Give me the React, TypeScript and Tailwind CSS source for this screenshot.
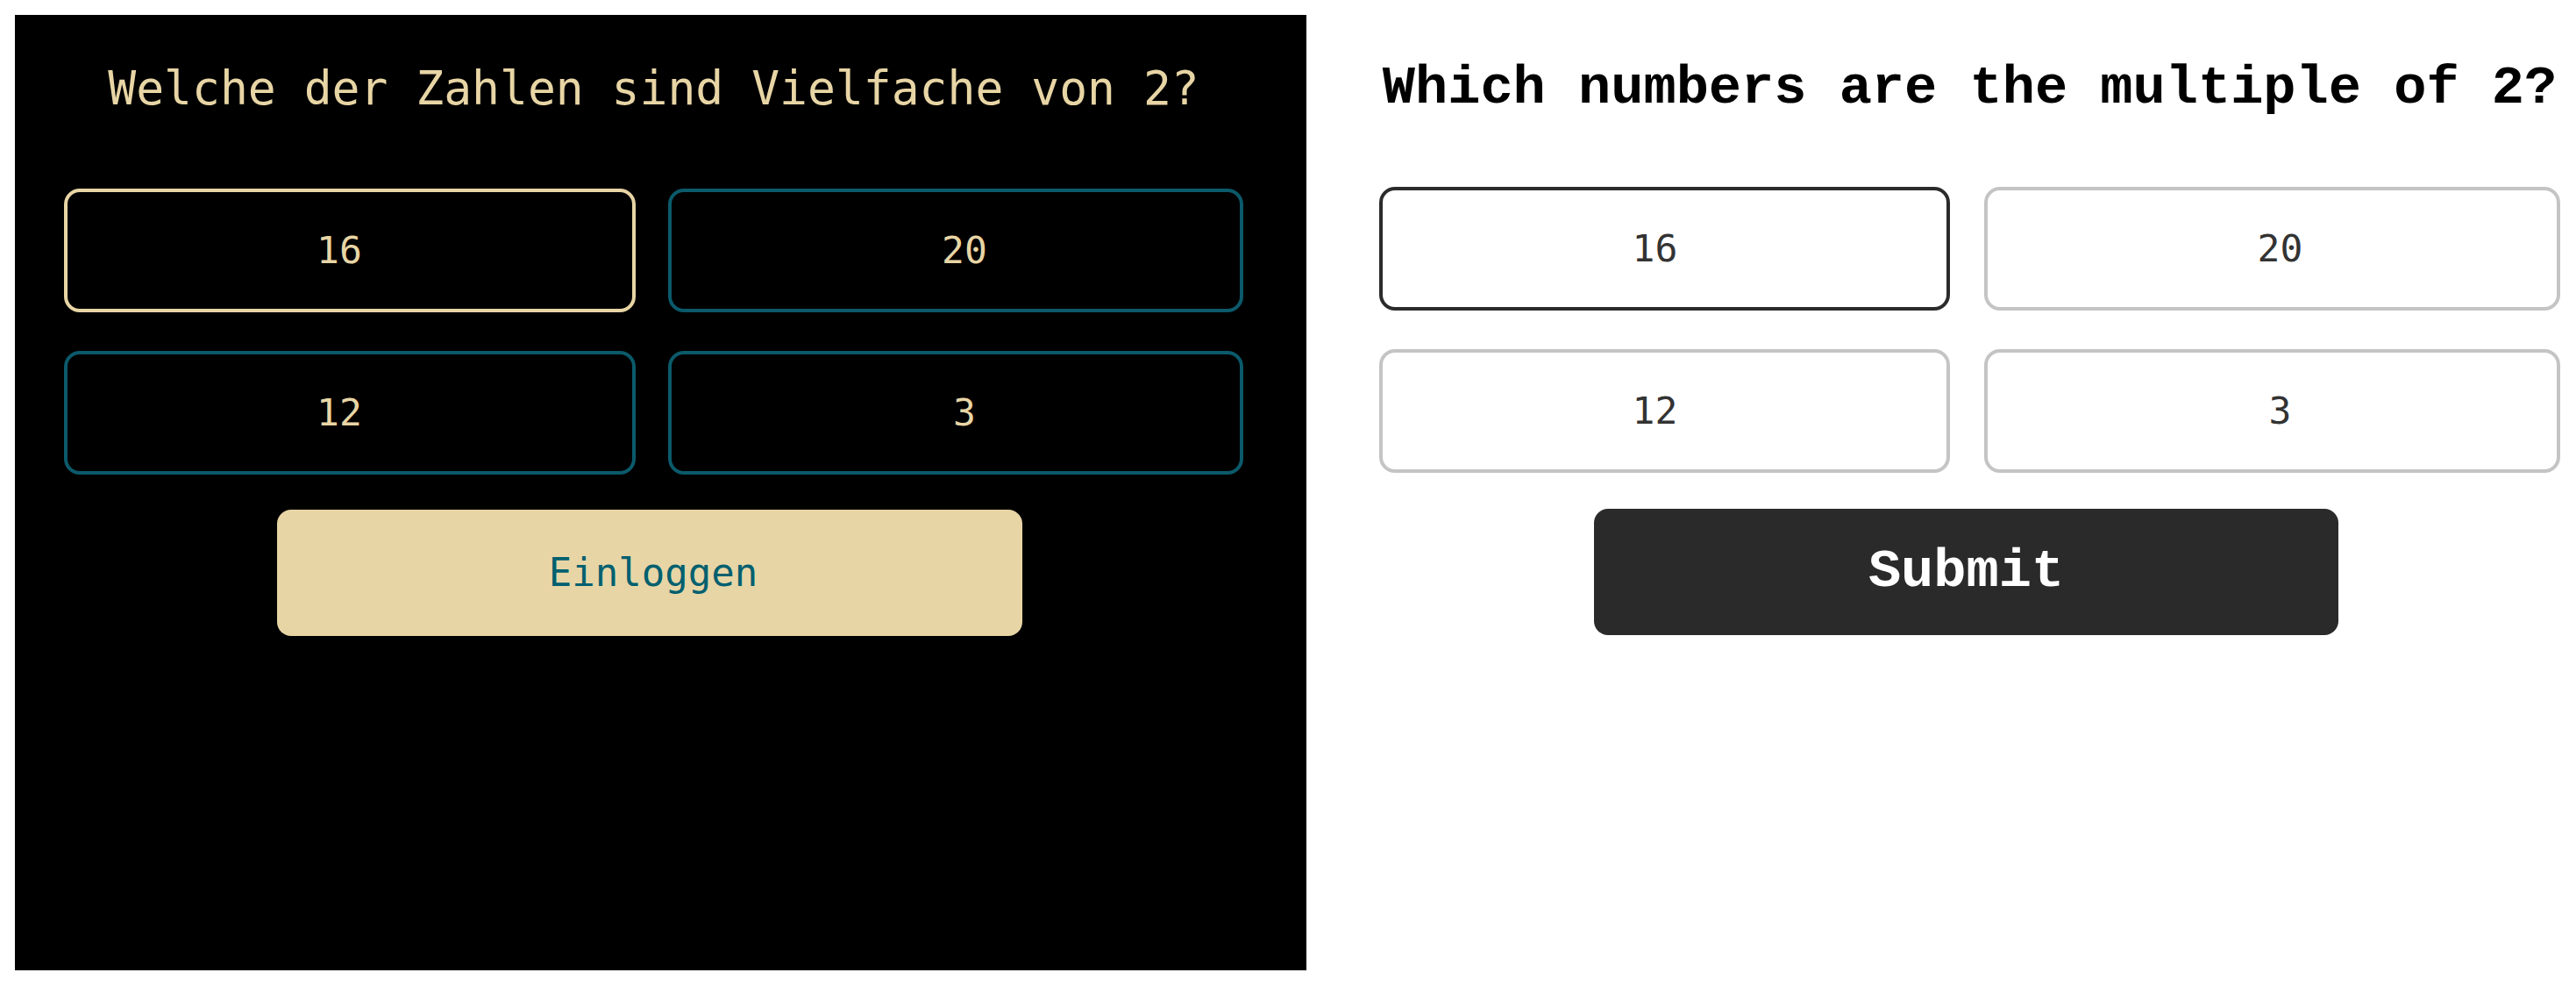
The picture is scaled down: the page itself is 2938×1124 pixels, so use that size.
import React from "react";

const options = [
  { label: "16", selected: true, col: 0 },
  { label: "20", selected: false, col: 1 },
  { label: "12", selected: false, col: 0 },
  { label: "3", selected: false, col: 1 },
];

export default function App() {
  return (
    <div className="flex w-[2938px] h-[1124px] bg-white overflow-hidden">
      {/* Left: dark theme */}
      <div className="ml-[17px] mt-[17px] w-[1473px] h-[1090px] shrink-0 bg-black border-b border-[#dcdcdc] flex flex-col pl-[56px] pr-[72px] font-['DejaVu_Sans_Mono',monospace]">
        <h1 className="mt-[52px] text-center text-[53px] leading-[64px] text-[#e8d5a5] whitespace-nowrap">
          Welche der Zahlen sind Vielfache von 2?
        </h1>
        <div className="mt-[82px] grid grid-cols-[652px_656px] gap-x-[37px] gap-y-[44px]">
          {options.map((o) => (
            <button
              key={o.label}
              className={`h-[141px] rounded-[18px] border-4 bg-black text-[43px] leading-none text-[#e8d5a5] flex items-center justify-center ${
                o.selected ? "border-[#e8d5a5]" : "border-[#0b5a6b]"
              } ${o.col === 0 ? "pr-[24px]" : "pl-[20px]"}`}
            >
              {o.label}
            </button>
          ))}
        </div>
        <button className="mt-[40px] ml-[243px] self-start w-[850px] h-[144px] rounded-[16px] bg-[#e8d5a5] text-[#00606f] text-[44px] leading-none flex items-center justify-center pl-[8px]">
          Einloggen
        </button>
      </div>

      {/* Right: light theme */}
      <div className="ml-[83px] w-[1347px] shrink-0 flex flex-col">
        <h1 className="mt-[65px] text-center text-[62px] leading-[72px] font-bold text-black whitespace-nowrap font-['Liberation_Mono',monospace]">
          Which numbers are the multiple of 2?
        </h1>
        <div className="mt-[76px] grid grid-cols-[651px_657px] gap-x-[39px] gap-y-[44px] font-['DejaVu_Sans_Mono',monospace]">
          {options.map((o) => (
            <button
              key={o.label}
              className={`h-[141px] rounded-[18px] border-4 bg-white text-[43px] leading-none text-[#333333] flex items-center justify-center ${
                o.selected ? "border-[#2b2b2b]" : "border-[#c4c4c4]"
              } ${o.col === 0 ? "pr-[22px]" : "pl-[18px]"}`}
            >
              {o.label}
            </button>
          ))}
        </div>
        <button className="mt-[41px] ml-[245px] self-start w-[849px] h-[144px] rounded-[16px] bg-[#2a2a2a] text-white text-[62px] leading-none font-bold flex items-center justify-center font-['Liberation_Mono',monospace]">
          Submit
        </button>
      </div>
    </div>
  );
}
